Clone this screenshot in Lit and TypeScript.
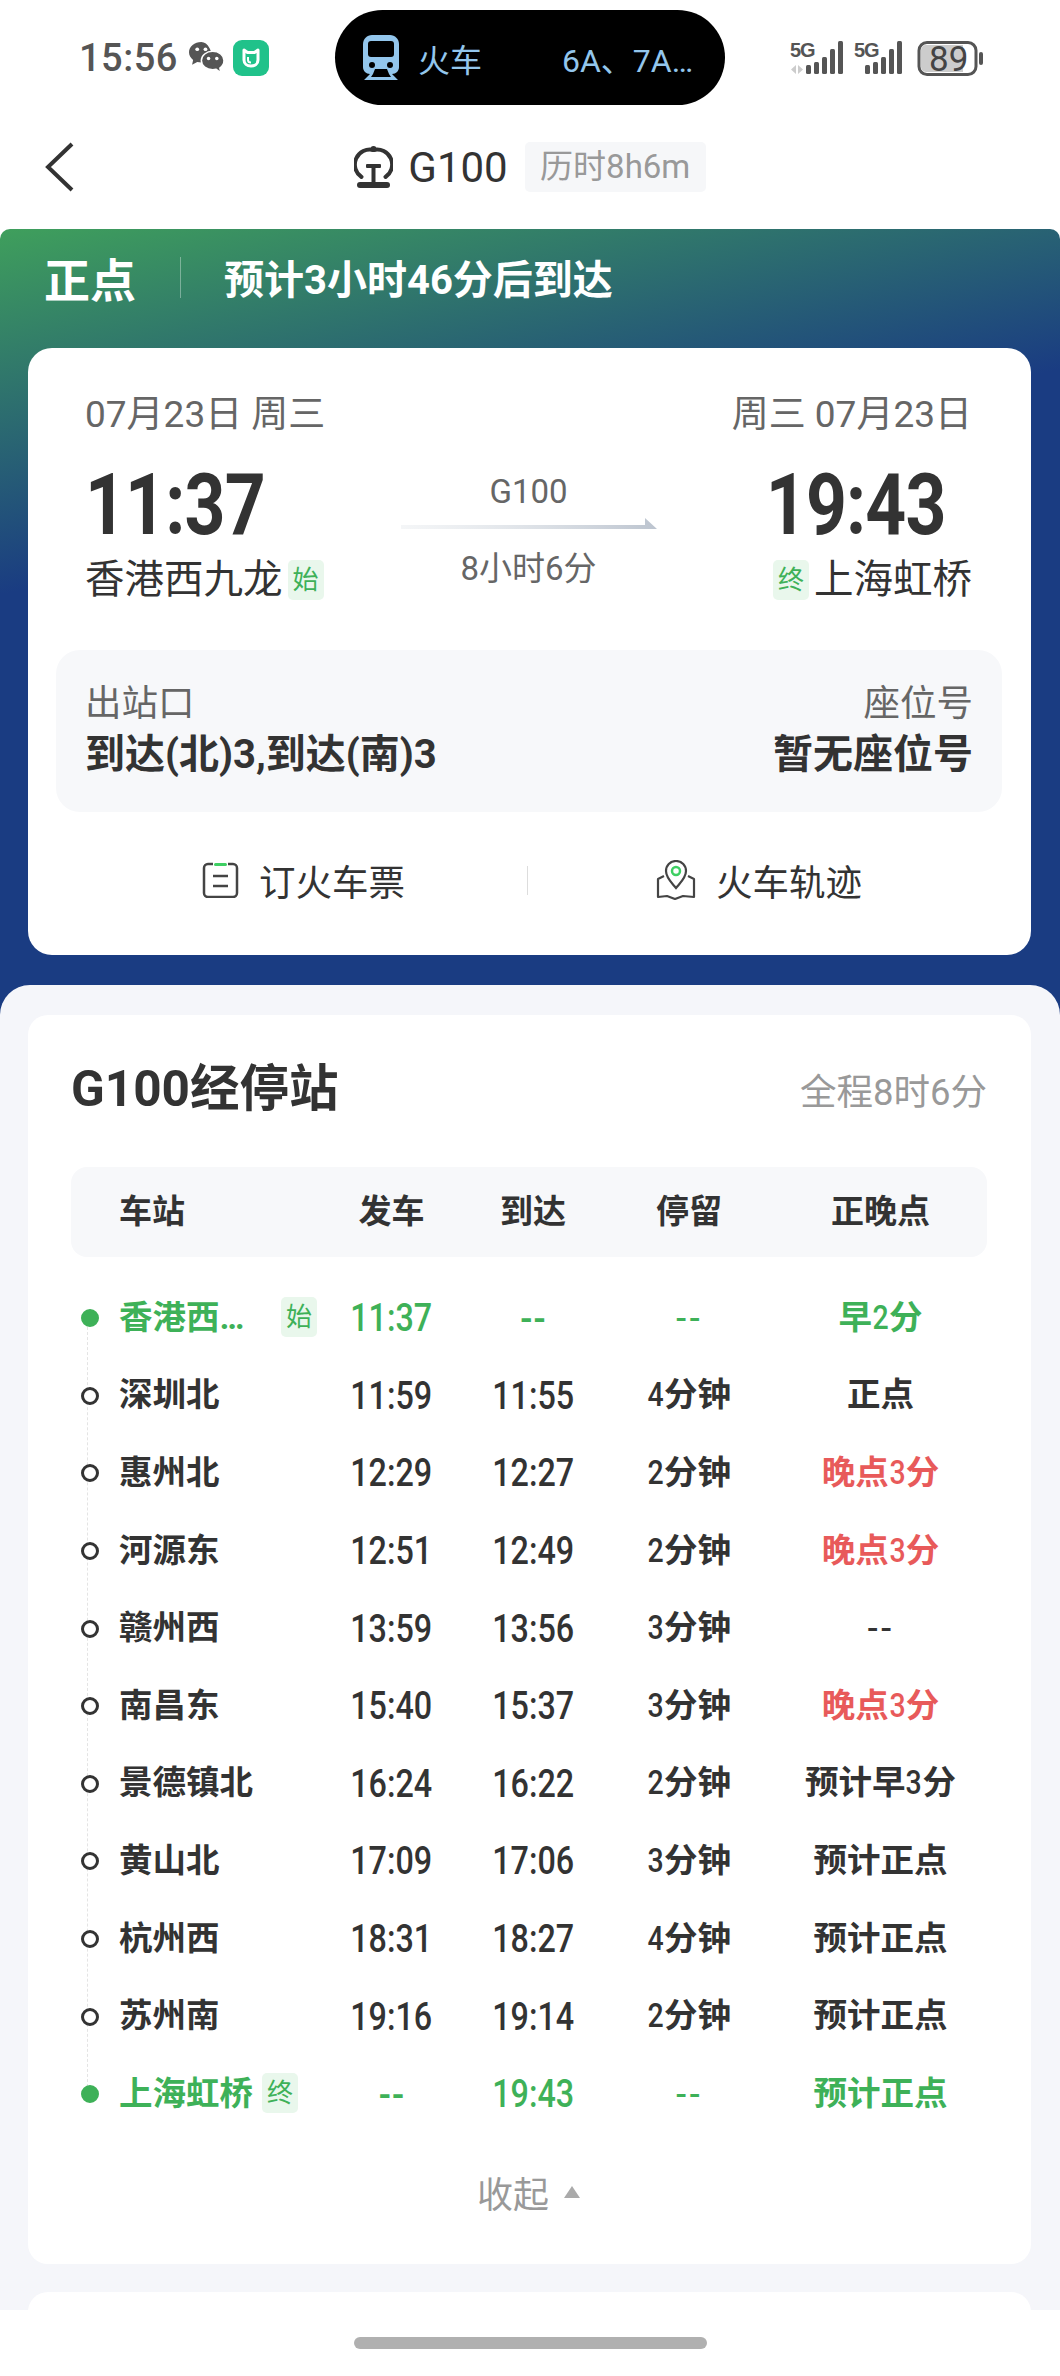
import { LitElement, css, html, svg } from 'lit'
import { customElement } from 'lit/decorators.js'

type Tone = 'dark' | 'green' | 'red'

interface Stop {
   name: string
   tag?: string
   depart: string
   arrive: string
   stay: string
   status: string
   tone?: Tone
}

const STOPS: Stop[] = [
   { name: '香港西九龙', tag: '始', depart: '11:37', arrive: '--', stay: '--', status: '早2分', tone: 'green' },
   { name: '深圳北', depart: '11:59', arrive: '11:55', stay: '4分钟', status: '正点' },
   { name: '惠州北', depart: '12:29', arrive: '12:27', stay: '2分钟', status: '晚点3分', tone: 'red' },
   { name: '河源东', depart: '12:51', arrive: '12:49', stay: '2分钟', status: '晚点3分', tone: 'red' },
   { name: '赣州西', depart: '13:59', arrive: '13:56', stay: '3分钟', status: '--' },
   { name: '南昌东', depart: '15:40', arrive: '15:37', stay: '3分钟', status: '晚点3分', tone: 'red' },
   { name: '景德镇北', depart: '16:24', arrive: '16:22', stay: '2分钟', status: '预计早3分' },
   { name: '黄山北', depart: '17:09', arrive: '17:06', stay: '3分钟', status: '预计正点' },
   { name: '杭州西', depart: '18:31', arrive: '18:27', stay: '4分钟', status: '预计正点' },
   { name: '苏州南', depart: '19:16', arrive: '19:14', stay: '2分钟', status: '预计正点' },
   { name: '上海虹桥', tag: '终', depart: '--', arrive: '19:43', stay: '--', status: '预计正点', tone: 'green' },
]

const BARS = [[24, 9], [21, 12], [16, 17], [8, 25], [0, 33]]

const signal = (x: number, barX: number, dim: boolean) => svg`
   <g fill="#555">
      ${BARS.map(([y, h], i) => svg`<rect x=${barX + i * 8} y=${y} width="5" height=${h} rx="1.500"/>`)}
   </g>
   ${dim ? svg`<path d="M${x + 6} 24v9l-5-4.500zM${x + 8} 24v9l5-4.500z" fill="#ccc"/>` : ''}
   <text x=${x} y="16" class="net">5G</text>
`

@customElement('app-root')
export class AppRoot extends LitElement {
   static styles = css`
      :host {
         display: block;
         width: 1060px;
         height: 2376px;
         overflow: hidden;
         background: #fff;
         color: #333;
         font-family: Roboto, "Noto Sans CJK SC", sans-serif;
      }
      * { box-sizing: border-box; }
      svg { display: block; flex: none; }

      /* status bar */
      .status {
         height: 105px;
         display: grid;
         grid-template-columns: 335px 390px 1fr;
         padding-top: 10px;
      }
      .status-left {
         display: flex;
         align-items: center;
         gap: 11px;
         height: 95px;
         padding: 0 0 0 79px;
         color: #555;
         font-size: 38px;
         font-weight: 500;
         line-height: 1;
         letter-spacing: 0.5px;
      }
      .status-left svg:last-child { margin-left: -2px; }
      .pill {
         height: 95px;
         border-radius: 48px;
         background: #000;
         color: #93c6ec;
         display: flex;
         align-items: center;
         padding: 0 0 0 28px;
      }
      .pill-label { font-size: 32px; margin-left: 19px; width: 144px; }
      .pill-text { font-size: 32px; white-space: nowrap; }
      .status-right { padding: 31px 0 0 65px; }
      .net { font: 700 20px "Liberation Sans", sans-serif; fill: #555; letter-spacing: -1px; }
      .batt { font: 400 35px Roboto, sans-serif; fill: #444; }

      /* title bar */
      .bar {
         height: 124px;
         display: grid;
         grid-template-columns: 1fr auto 1fr;
         align-items: center;
      }
      .back { padding-left: 45px; }
      .title { display: flex; align-items: center; gap: 15px; }
      .title-no { font-size: 42px; color: #333; }
      .title-tag {
         height: 50px;
         width: 181px;
         margin-left: 2px;
         border-radius: 5px;
         background: #f6f7f9;
         color: #999;
         font-size: 33px;
         line-height: 50px;
         text-align: center;
         white-space: nowrap;
      }

      /* gradient area */
      .hero {
         height: 791px;
         padding: 0 29px 0 28px;
         border-radius: 10px 10px 0 0;
         background: linear-gradient(168deg, #3f9f5c 0%, #1a3c82 36%);
      }
      .banner {
         height: 119px;
         display: flex;
         align-items: center;
         padding: 0 0 23px 16px;
         color: #fff;
         font-weight: 700;
      }
      .banner-state { font-size: 46px; width: 136px; }
      .banner-line { width: 1px; height: 41px; background: rgba(255, 255, 255, .35); }
      .banner-eta { font-size: 40px; margin-left: 43px; }

      .card { border-radius: 24px; background: #fff; }
      .trip { height: 607px; padding: 42px 0 0; }
      .ends {
         display: grid;
         grid-template-columns: 1fr 320px 1fr;
         height: 210px;
         padding: 0 59px 0 57px;
      }
      .end { display: flex; flex-direction: column; }
      .end.right { align-items: flex-end; }
      .date { font-size: 37px; line-height: 50px; color: #666; white-space: nowrap; }
      .clock {
         font-size: 86px;
         line-height: 100px;
         font-weight: 700;
         margin-top: 15px;
         letter-spacing: -1px;
         transform: scaleX(.83);
         transform-origin: 0 50%;
         white-space: nowrap;
      }
      .end.right .clock { margin-right: 26px; transform-origin: 100% 50%; }
      .place {
         display: flex;
         align-items: center;
         gap: 5px;
         font-size: 39.500px;
         line-height: 50px;
         white-space: nowrap;
      }
      .tag {
         flex: none;
         width: 36px;
         height: 40px;
         border-radius: 5px;
         background: #e9f7ec;
         color: #3eb158;
         font-size: 26px;
         font-weight: 400;
         line-height: 40px;
         text-align: center;
      }
      .mid {
         display: flex;
         flex-direction: column;
         align-items: center;
         padding-top: 82px;
         color: #666;
      }
      .mid-no { font-size: 33px; line-height: 40px; }
      .arrow { margin-top: 6px; }
      .mid-time { font-size: 33px; line-height: 44px; margin-top: 18px; }

      .info {
         height: 162px;
         margin: 50px 29px 0 28px;
         padding: 29px 29px 0 29px;
         border-radius: 24px;
         background: #f7f8fa;
         display: flex;
         justify-content: space-between;
      }
      .info-col { display: flex; flex-direction: column; }
      .info-col.right { align-items: flex-end; }
      .info-label { font-size: 36.500px; line-height: 50px; color: #666; }
      .info-value { font-size: 40px; line-height: 52px; font-weight: 700; white-space: nowrap; }

      .actions {
         display: grid;
         grid-template-columns: 447px 1px 1fr;
         align-items: center;
         margin: 33px 41px 0 52px;
         height: 70px;
      }
      .action {
         display: flex;
         align-items: center;
         justify-content: center;
         gap: 20px;
         font-size: 36.500px;
         color: #333;
      }
      .action-line { height: 29px; background: #ddd; }

      /* bottom sheet */
      .sheet {
         position: relative;
         height: 1325px;
         margin-top: -35px;
         padding: 30px 29px 0 28px;
         overflow: hidden;
         border-radius: 30px 30px 0 0;
         background: #f5f6fa;
      }
      .stops { height: 1249px; padding: 0 44px 0 43px; border-radius: 20px; }
      .stops-head {
         height: 152px;
         display: flex;
         justify-content: space-between;
         align-items: center;
      }
      .stops-title { font-size: 49.500px; font-weight: 700; line-height: 60px; padding-bottom: 4px; }
      .stops-total { font-size: 36.500px; color: #999; padding-bottom: 4px; }

      .cols { display: grid; grid-template-columns: 250px 141px 142px 170px 213px; align-items: center; }
      .thead {
         height: 90px;
         padding-bottom: 6px;
         border-radius: 16px;
         background: #f7f8fa;
         font-size: 33px;
         font-weight: 700;
         text-align: center;
      }
      .thead span:first-child { text-align: left; padding-left: 48px; }

      .list { position: relative; padding-top: 21px; }
      .list::before {
         content: '';
         position: absolute;
         left: 16px;
         top: 60px;
         bottom: 40px;
         border-left: 1px dashed #e4e4e4;
      }
      .row {
         height: 77.600px;
         padding-bottom: 5px;
         text-align: center;
         font-size: 33.500px;
         font-weight: 700;
      }
      .row.green { color: #3eb158; }
      .station {
         position: relative;
         display: flex;
         align-items: center;
         gap: 9px;
         padding-left: 48px;
         text-align: left;
      }
      .station .tag { margin-top: 5px; }
      .station::before {
         content: '';
         position: absolute;
         left: 10px;
         top: 50%;
         width: 12px;
         height: 12px;
         margin-top: -5px;
         border: 3px solid #333;
         border-radius: 50%;
         background: #fff;
      }
      .row.green .station::before { border-color: #3eb158; background: #3eb158; }
      .name {
         max-width: 153px;
         overflow: hidden;
         white-space: nowrap;
         text-overflow: ellipsis;
      }
      .time {
         display: inline-block;
         font-size: 38px;
         font-weight: 500;
         transform: translateY(4px) scaleX(.85);
      }
      .dash { font-weight: 700; display: inline-block; transform: translateY(4px); }
      .dash.thin { font-weight: 500; letter-spacing: 2px; }
      .num { display: inline-block; font-weight: 500; transform: scaleX(.85); margin: 0 -1px; }
      .st-green { color: #3eb158; }
      .st-red { color: #e85a5a; }
      .st-dark { color: #333; }

      .fold {
         display: flex;
         align-items: center;
         justify-content: center;
         gap: 14px;
         height: 60px;
         margin-top: 30px;
         color: #999;
         font-size: 36px;
      }
      .next { height: 60px; margin-top: 28px; border-radius: 20px; }

      .foot { height: 66px; padding-top: 27px; background: #fff; display: flex; justify-content: center; }
      .home { width: 353px; height: 12px; border-radius: 6px; background: #b0b0b0; }
   `

   // digits sit in a narrower, lighter face than the hanzi around them
   renderMixed(v: string) {
      return v.split(/(\d)/).map(p => /\d/.test(p) ? html`<span class="num">${p}</span>` : p)
   }

   renderStatus(s: Stop) {
      if (s.status === '--') return html`<span class="dash thin">--</span>`
      const cls = s.tone === 'green' ? 'st-green' : s.tone === 'red' ? 'st-red' : 'st-dark'
      return html`<span class=${cls}>${this.renderMixed(s.status)}</span>`
   }

   renderTime(v: string) {
      if (v === '--') return html`<span class="dash">--</span>`
      return html`<span class="time">${v}</span>`
   }

   renderStay(v: string) {
      if (v === '--') return html`<span class="dash thin">--</span>`
      return this.renderMixed(v)
   }

   render() {
      return html`
         <div class="status">
            <div class="status-left">
               <span>15:56</span>
               <svg width="35" height="33" viewBox="0 0 34 32">
                  <path d="M12 1C5.400 1 0 5.400 0 11c0 3 1.600 5.600 4 7.400L3 23l5-2.600c1.200.3 2.600.5 4 .5 8 0 12-8 8-14C18 3 15 1 12 1z" fill="#555"/>
                  <circle cx="8" cy="8" r="1.800" fill="#fff"/>
                  <circle cx="16" cy="8" r="1.800" fill="#fff"/>
                  <path d="M23 10c-6.100 0-11 3.900-11 9s4.900 9 11 9c1.200 0 2.300-.2 3.400-.5L31 31l-1-4.700c2.500-1.700 4-4.300 4-7.300 0-5.100-4.900-9-11-9z" fill="#555" stroke="#fff" stroke-width="1.500"/>
                  <circle cx="19" cy="17" r="1.700" fill="#fff"/>
                  <circle cx="27" cy="17" r="1.700" fill="#fff"/>
               </svg>
               <svg width="36" height="36" viewBox="0 0 36 36">
                  <rect width="36" height="36" rx="9" fill="#20c28a"/>
                  <path d="M11 10l3.500 2.500h7L25 10v10c0 3.500-3 6-7 6s-7-2.500-7-6z" fill="none" stroke="#fff" stroke-width="3" stroke-linejoin="round"/>
                  <path d="M15 17v3c0 1.500 1 2.500 3 2.500" fill="none" stroke="#fff" stroke-width="2"/>
               </svg>
            </div>
            <div class="pill">
               <svg width="36" height="45" viewBox="0 0 36 45">
                  <path d="M9 0h18c5 0 9 4 9 9v23c0 4-3 7-7 7H7c-4 0-7-3-7-7V9c0-5 4-9 9-9z" fill="#93c6ec"/>
                  <rect x="5" y="6" width="26" height="16" rx="3" fill="#000"/>
                  <circle cx="9" cy="30" r="3" fill="#000"/>
                  <circle cx="27" cy="30" r="3" fill="#000"/>
                  <path d="M7 39L1 45h34l-6-6-3 0 2 3H8l2-3z" fill="#93c6ec"/>
                  <path d="M12 34h12l2 5H10z" fill="#000"/>
               </svg>
               <span class="pill-label">火车</span>
               <span class="pill-text">6A、7A…</span>
            </div>
            <div class="status-right">
               <svg width="195" height="36" viewBox="0 0 195 36">
                  ${signal(0, 16, true)}
                  ${signal(64, 75, false)}
                  <rect x="129" y="1.500" width="57" height="32" rx="8" fill="#fff" stroke="#555" stroke-width="3"/>
                  <path d="M136 4h37v27h-37a5 5 0 0 1-5-5V9a5 5 0 0 1 5-5z" fill="#ccc"/>
                  <rect x="189" y="11" width="4" height="13" rx="2" fill="#555"/>
                  <text x="139" y="30" class="batt">89</text>
               </svg>
            </div>
         </div>

         <div class="bar">
            <div class="back">
               <svg width="29" height="50" viewBox="0 0 29 50">
                  <path d="M27 2L3 25l24 23" fill="none" stroke="#333" stroke-width="4"/>
               </svg>
            </div>
            <div class="title">
               <svg width="39" height="43" viewBox="0 0 39 43">
                  <path d="M7.500 31A15 15 0 0 1 19.500 4a15 15 0 0 1 12 27" fill="none" stroke="#333" stroke-width="4" stroke-linecap="round"/>
                  <circle cx="19.500" cy="3" r="3" fill="#333"/>
                  <rect x="12" y="18" width="15" height="4" rx="1" fill="#333"/>
                  <rect x="17.500" y="20" width="4" height="18" fill="#333"/>
                  <rect x="3" y="36" width="33" height="6" rx="3" fill="#333"/>
               </svg>
               <span class="title-no">G100</span>
               <span class="title-tag">历时8h6m</span>
            </div>
            <div></div>
         </div>

         <div class="hero">
            <div class="banner">
               <span class="banner-state">正点</span>
               <span class="banner-line"></span>
               <span class="banner-eta">预计3小时46分后到达</span>
            </div>
            <div class="card trip">
               <div class="ends">
                  <div class="end">
                     <span class="date">07月23日 周三</span>
                     <span class="clock">11:37</span>
                     <span class="place">香港西九龙<span class="tag">始</span></span>
                  </div>
                  <div class="mid">
                     <span class="mid-no">G100</span>
                     <svg class="arrow" width="256" height="11" viewBox="0 0 256 11">
                        <defs>
                           <linearGradient id="shaft">
                              <stop offset="0" stop-color="#e4e8ec" stop-opacity=".4"/>
                              <stop offset="1" stop-color="#bcc4cf"/>
                           </linearGradient>
                        </defs>
                        <path d="M0 7h244V0l12 11H0z" fill="url(#shaft)"/>
                     </svg>
                     <span class="mid-time">8小时6分</span>
                  </div>
                  <div class="end right">
                     <span class="date">周三 07月23日</span>
                     <span class="clock">19:43</span>
                     <span class="place"><span class="tag">终</span>上海虹桥</span>
                  </div>
               </div>
               <div class="info">
                  <div class="info-col">
                     <span class="info-label">出站口</span>
                     <span class="info-value">到达(北)3,到达(南)3</span>
                  </div>
                  <div class="info-col right">
                     <span class="info-label">座位号</span>
                     <span class="info-value">暂无座位号</span>
                  </div>
               </div>
               <div class="actions">
                  <div class="action">
                     <svg width="37" height="36" viewBox="0 0 37 36">
                        <rect x="2" y="2" width="33" height="33" rx="4" fill="#fff" stroke="#444" stroke-width="2.500"/>
                        <rect x="11" y="0" width="15" height="4" fill="#fff"/>
                        <rect x="12" y="1" width="13" height="3" rx="1.500" fill="#3ecf63"/>
                        <path d="M11 14h15M11 24h15" stroke="#444" stroke-width="2.500"/>
                     </svg>
                     <span>订火车票</span>
                  </div>
                  <div class="action-line"></div>
                  <div class="action">
                     <svg width="40" height="40" viewBox="0 0 40 40">
                        <path d="M20 1c-6 0-10 4.500-10 10 0 7 6 12 10 17 4-5 10-10 10-17 0-5.500-4-10-10-10z" fill="#fff" stroke="#444" stroke-width="2.200"/>
                        <circle cx="20" cy="11" r="4" fill="#fff" stroke="#3ecf63" stroke-width="2.500"/>
                        <path d="M8 16l-6 3v18l9-1 8 3 8-3 11 1V19l-6-3" fill="none" stroke="#444" stroke-width="2.200" stroke-linejoin="round"/>
                     </svg>
                     <span>火车轨迹</span>
                  </div>
               </div>
            </div>
         </div>

         <div class="sheet">
            <div class="card stops">
               <div class="stops-head">
                  <span class="stops-title">G100经停站</span>
                  <span class="stops-total">全程8时6分</span>
               </div>
               <div class="cols thead">
                  <span>车站</span><span>发车</span><span>到达</span><span>停留</span><span>正晚点</span>
               </div>
               <div class="list">
                  ${STOPS.map(s => html`
                     <div class="cols row ${s.tone === 'green' ? 'green' : ''}">
                        <div class="station">
                           <span class="name">${s.name}</span>
                           ${s.tag ? html`<span class="tag">${s.tag}</span>` : ''}
                        </div>
                        <div>${this.renderTime(s.depart)}</div>
                        <div>${this.renderTime(s.arrive)}</div>
                        <div>${this.renderStay(s.stay)}</div>
                        <div>${this.renderStatus(s)}</div>
                     </div>
                  `)}
               </div>
               <div class="fold">
                  <span>收起</span>
                  <svg width="18" height="14" viewBox="0 0 18 14"><path d="M9 1l8 12H1z" fill="#aaa"/></svg>
               </div>
            </div>
            <div class="card next"></div>
         </div>

         <div class="foot"><div class="home"></div></div>
      `
   }
}
